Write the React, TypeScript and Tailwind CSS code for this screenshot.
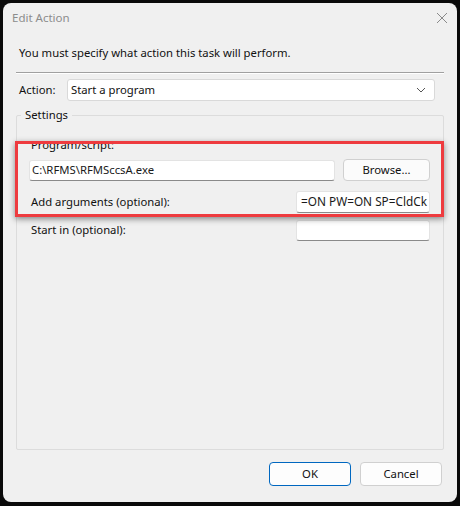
import React from "react";

const font = { fontFamily: '"Noto Sans", "Open Sans", sans-serif' };

function TextBox({ className, children }: { className?: string; children?: React.ReactNode }) {
  return (
    <div
      className={
        "bg-white border border-[#e3e3e3] border-b-[#8a8a8a] rounded-[3px] flex items-center px-[2px] text-[11.3px] text-[#1a1a1a] overflow-hidden whitespace-nowrap " +
        (className ?? "")
      }
    >
      {children}
    </div>
  );
}

export default function App() {
  return (
    <div className="w-[460px] h-[506px] bg-[#0a0a0a] pt-[3px] pl-[3px] pr-[3px] pb-[4px]" style={font}>
      <div className="w-full h-full bg-[#f0f0f0] rounded-[8px] flex flex-col relative">
        {/* title bar */}
        <div className="h-[30px] flex items-center justify-between pl-[9px] pr-[9px] shrink-0">
          <span className="text-[11.5px] text-[#8c8c8c]">Edit Action</span>
          <svg width="12" height="12" viewBox="0 0 12 12">
            <path d="M1 1 L11 11 M11 1 L1 11" stroke="#8a8a8a" strokeWidth="1" />
          </svg>
        </div>

        <div className="px-[13px] flex flex-col flex-1">
          <div className="pl-[3px] pt-[11px] text-[11.3px] text-[#111] leading-[18px]">
            You must specify what action this task will perform.
          </div>
          <div className="mt-[10px] h-[1px] bg-[#a0a0a0] border-b border-white box-content" />

          <div className="mt-[5px] flex items-center">
            <span className="pl-[3px] w-[51px] text-[11.3px] text-[#111]">Action:</span>
            <div className="flex-1 mr-[9px] h-[22px] bg-white border border-[#d9d9d9] rounded-[3px] flex items-center justify-between pl-[3px] pr-[8px] text-[11.3px] text-[#111]">
              <span>Start a program</span>
              <svg width="10" height="6" viewBox="0 0 10 6">
                <path d="M1 1 L5 5 L9 1" stroke="#555" strokeWidth="1" fill="none" />
              </svg>
            </div>
          </div>

          {/* Settings group */}
          <div className="flex-1 relative border border-[#dcdcdc] rounded-[2px] mb-[52px] mt-[14px]">
            <span className="absolute -top-[10px] left-[4px] px-[4px] bg-[#f0f0f0] text-[11.3px] text-[#111] leading-[18px]">
              Settings
            </span>
            <div className="pt-[20px] pl-[12px] pr-[12px] flex flex-col">
              <span className="pl-[2px] text-[11.3px] text-[#111] leading-[18px]">Program/script:</span>
              <div className="mt-[5px] flex items-center">
                <TextBox className="w-[306px] h-[21px]">C:\RFMS\RFMSccsA.exe</TextBox>
                <button className="ml-[8px] w-[87px] h-[22px] bg-[#fbfbfb] border border-[#d0d0d0] rounded-[4px] text-[11.3px] text-[#111]">
                  Browse...
                </button>
              </div>
              <div className="mt-[10px] flex items-center justify-between">
                <span className="pl-[2px] text-[11.3px] text-[#111]">Add arguments (optional):</span>
                <TextBox className="w-[134px] h-[22px] mr-[1px] justify-end text-[11.8px]">=ON PW=ON SP=CldCk</TextBox>
              </div>
              <div className="mt-[7px] flex items-center justify-between">
                <span className="pl-[2px] text-[11.3px] text-[#111]">Start in (optional):</span>
                <TextBox className="w-[134px] h-[21px] mr-[1px]" />
              </div>
            </div>
            {/* red highlight */}
            <div className="absolute left-[-2px] right-[-1px] top-[25px] h-[76px] border-[3px] border-[#ee3b3f] shadow-[0_2px_6px_rgba(0,0,0,0.45)] pointer-events-none" />
          </div>

          <div className="absolute bottom-[16px] right-[15px] flex gap-[9px]">
            <button className="w-[82px] h-[24px] bg-[#fdfdfd] border border-[#0067c0] rounded-[4px] text-[11.3px] text-[#111]">
              OK
            </button>
            <button className="w-[82px] h-[24px] bg-[#fdfdfd] border border-[#d0d0d0] rounded-[4px] text-[11.3px] text-[#111]">
              Cancel
            </button>
          </div>
        </div>
      </div>
    </div>
  );
}
